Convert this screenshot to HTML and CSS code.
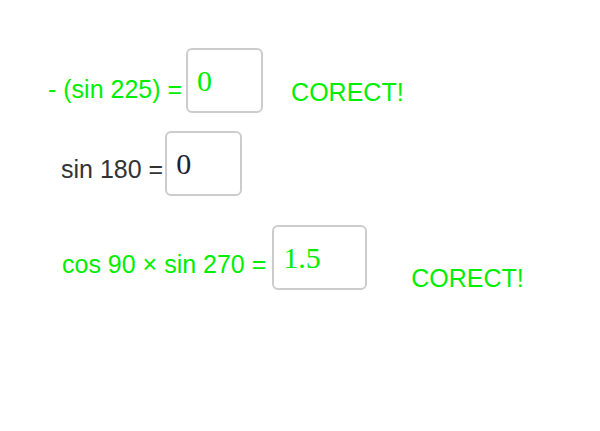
FILE: index.html
```html
<!DOCTYPE html>
<html lang="ro">
<head>
<meta charset="utf-8">
<title>Trigonometrie</title>
<link rel="stylesheet" href="styles.css">
</head>
<body>
<main class="quiz">
  <div class="row row-1">
    <span class="expr expr-ok">- (sin 225) =</span>
    <span class="answer answer-1"><span class="value value-ok">0</span></span>
    <span class="verdict verdict-1">CORECT!</span>
  </div>
  <div class="row row-2">
    <span class="expr expr-plain">sin 180 =</span>
    <span class="answer answer-2"><span class="value value-plain">0</span></span>
  </div>
  <div class="row row-3">
    <span class="expr expr-ok">cos 90 × sin 270 =</span>
    <span class="answer answer-3"><span class="value value-ok">1.5</span></span>
    <span class="verdict verdict-3">CORECT!</span>
  </div>
</main>
</body>
</html>
```
FILE: styles.css
```css
html, body {
  margin: 0;
  padding: 0;
  background: #ffffff;
}

body {
  width: 600px;
  height: 431px;
  overflow: hidden;
  font-family: "Liberation Sans", Arial, sans-serif;
}

.quiz {
  display: flex;
  flex-direction: column;
  padding-top: 48px;
}

.row {
  display: flex;
  align-items: flex-end;
}

.row-1 { padding-left: 48px; }
.row-2 { padding-left: 61px; margin-top: 18px; }
.row-3 { padding-left: 62px; margin-top: 29px; }

.expr {
  font-size: 25px;
  line-height: 25px;
  white-space: nowrap;
}

.row-1 .expr { margin-bottom: 11px; }
.row-2 .expr { margin-bottom: 14px; }
.row-3 .expr { margin-bottom: 13px; }

.expr-ok { color: #00ee00; }
.expr-plain { color: #333333; }

.answer {
  box-sizing: border-box;
  height: 65px;
  border: 2px solid #cccccc;
  border-radius: 6px;
  display: flex;
  align-items: center;
  padding-left: 9px;
}

.answer-1 { width: 77px; margin-left: 4px; }
.answer-2 { width: 77px; margin-left: 2px; }
.answer-3 { width: 95px; margin-left: 6px; }

.value {
  font-family: "Liberation Serif", "Times New Roman", serif;
  font-size: 30px;
}

.value-ok { color: #00ee00; }
.value-plain { color: #1c1c3a; }

.verdict {
  color: #00ee00;
  font-size: 25px;
  line-height: 25px;
  white-space: nowrap;
}

.verdict-1 { margin-left: 28px; margin-bottom: 8px; }
.verdict-3 { margin-left: 44px; margin-bottom: -1px; }
```
